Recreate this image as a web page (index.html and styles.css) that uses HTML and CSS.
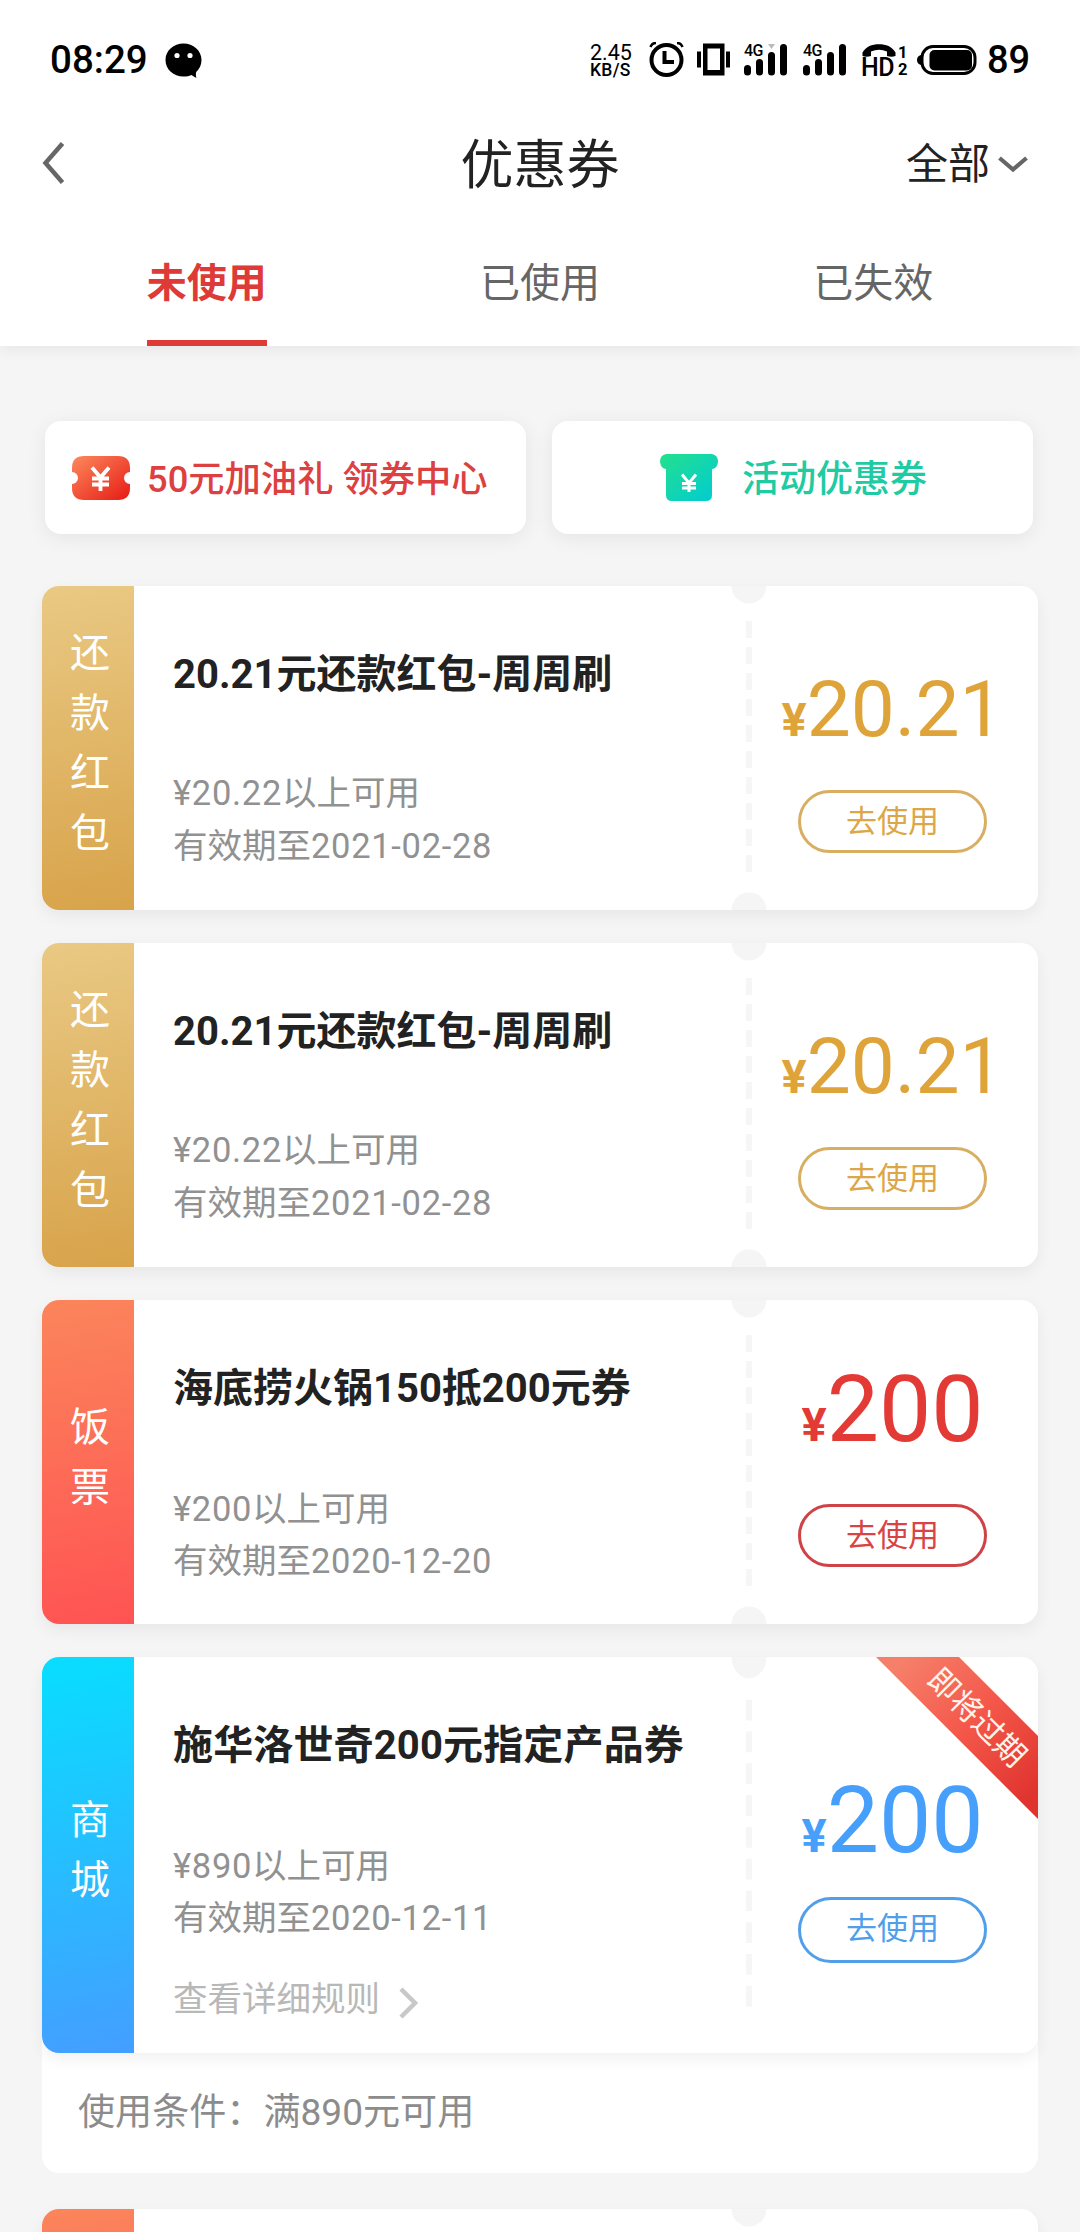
FILE: index.html
```html
<!DOCTYPE html>
<html lang="zh-CN">
<head>
<meta charset="utf-8">
<title>优惠券</title>
<link rel="stylesheet" href="styles.css">
</head>
<body>
<svg class="defs" width="0" height="0" aria-hidden="true">
  <defs>
    <symbol id="perforation" viewBox="0 0 36 324" preserveAspectRatio="none">
      <circle cx="18" cy="0" r="17.5" fill="#f5f5f5"/>
      <path d="M18 35V287" stroke="#f6f6f6" stroke-width="6" stroke-dasharray="17 9"/>
    </symbol>
    <symbol id="notch" viewBox="0 0 36 18"><circle cx="18" cy="18" r="17.5" fill="#f5f5f5"/></symbol>
    <symbol id="signal" viewBox="0 0 44 34">
      <path d="M3.500 26.500V30M15.500 20.500V30M27.500 13.500V30M39.500 5.500V30" stroke="#000" stroke-width="7" stroke-linecap="round"/>
    </symbol>
  </defs>
</svg>
<div class="screen">
  <header class="header">
    <div class="status">
      <span class="clock">08:29</span>
      <svg class="chat" viewBox="0 0 37 36"><path d="M18.5.5C8.700.5.5 7.500.5 17s8 16.500 18 16.500c3 0 5.500-.4 8-1.500 1.500 1 3 2.200 5 3-.8-1.800-.8-4-.3-6 3.300-3 5.300-7.200 5.300-12C36.500 7.500 28.300.5 18.500.5z"/><circle cx="12" cy="12.500" r="2.600" fill="#fff"/><circle cx="25" cy="12.500" r="2.600" fill="#fff"/></svg>
      <span class="spacer"></span>
      <div class="speed"><span>2.45</span><span class="unit">KB/S</span></div>
      <svg class="alarm" viewBox="0 0 35 35"><circle cx="17.500" cy="18" r="15" fill="none" stroke="#000" stroke-width="4"/><path d="M15.500 9V20H25" fill="none" stroke="#000" stroke-width="4"/><path d="M1.500 5Q3 1 7 1M33.500 5Q32 1 28 1" fill="none" stroke="#000" stroke-width="2.500"/></svg>
      <svg class="vibrate" viewBox="0 0 33 33"><path fill-rule="evenodd" d="M6 .5H27.500V32.500H6zM10.500 5.500V27H23V5.500z"/><path d="M0 8.500H4V24.500H0zM29 8.500H33V24.500H29z"/></svg>
      <div class="cell"><span class="net">4G</span><svg class="bars" viewBox="0 0 44 34"><use href="#signal"/><path d="M24 2H31L27.500 7z" fill="#bbb"/></svg></div>
      <div class="cell"><span class="net">4G</span><svg class="bars" viewBox="0 0 44 34"><use href="#signal"/></svg></div>
      <div class="volte">
        <svg class="handset" viewBox="0 0 34 13"><path d="M.5 12V8.500C4 2.500 10 .3 17 .3S30 2.500 33.500 8.500V12Q29.500 13.500 25 12V7.500Q17 4 9 7.500V12Q4.500 13.500.5 12z"/></svg>
        <span class="hd">HD</span><span class="sim"><span>1</span><span>2</span></span>
      </div>
      <svg class="battery" viewBox="0 0 60 30"><rect x="5" y="1.500" width="53" height="27" rx="11" fill="none" stroke="#000" stroke-width="3"/><rect x="12.500" y="5" width="42.500" height="20.500" rx="5"/><path d="M4 10Q0 11 0 15t4 5z"/></svg>
      <span class="level">89</span>
    </div>
    <div class="navbar">
      <svg class="back" viewBox="0 0 22 42"><path d="M20.500 1.500L3.500 21L20.500 40.500" fill="none" stroke="#666" stroke-width="4.500"/></svg>
      <h1 class="title">优惠券</h1>
      <div class="filter"><span>全部</span><svg class="down" viewBox="0 0 30 17"><path d="M1.500 2L15 13.500L28.500 2" fill="none" stroke="#666" stroke-width="4.200"/></svg></div>
    </div>
    <nav class="tabs">
      <div class="tab active"><span>未使用</span></div>
      <div class="tab"><span>已使用</span></div>
      <div class="tab"><span>已失效</span></div>
    </nav>
  </header>

  <main class="content">
    <div class="promos">
      <div class="promo red">
        <svg class="ticket" viewBox="0 0 58 44"><defs><linearGradient id="tr" x1="0" y1="0" x2="1" y2="1"><stop offset="0" stop-color="#fc8a5d"/><stop offset="1" stop-color="#e71a14"/></linearGradient></defs><path fill="url(#tr)" d="M12 0H46Q58 0 58 12V16A6 6 0 0 0 58 28V32Q58 44 46 44H12Q0 44 0 32V28A6 6 0 0 0 0 16V12Q0 0 12 0z"/><path d="M20 11.500L28.500 21.500L37 11.500M28.500 21V35M20 22.500H37M20 28.500H37" fill="none" stroke="#fff" stroke-width="3.800"/></svg>
        <span>50元加油礼 领券中心</span>
      </div>
      <div class="promo green">
        <svg class="voucher" viewBox="0 0 58 47"><defs><linearGradient id="tg" x1="0" y1="0" x2="1" y2="1"><stop offset="0" stop-color="#24e08c"/><stop offset="1" stop-color="#00cbd4"/></linearGradient></defs><path fill="url(#tg)" d="M6 0H52Q58 1 58 8Q57 15 52 15V41Q52 47 46 47H12Q6 47 6 41V15Q1 15 0 8Q0 1 6 0z"/><path d="M22 20.500L29 29L36 20.500M29 29V38M22 29.500H36M22 34H36" fill="none" stroke="#fff" stroke-width="3"/></svg>
        <span>活动优惠券</span>
      </div>
    </div>

    <div class="list">
      <section class="coupon gold">
        <div class="kind"><span>还</span><span>款</span><span>红</span><span>包</span></div>
        <div class="info">
          <h2 class="name">20.21元还款红包-周周刷</h2>
          <p class="limit"><span class="num">¥20.22</span>以上可用</p>
          <p class="expiry">有效期至<span class="num">2021-02-28</span></p>
        </div>
        <svg class="perf"><use href="#perforation"/></svg><svg class="notch"><use href="#notch"/></svg>
        <div class="value"><div class="amount"><b>¥</b>20.21</div><div class="use">去使用</div></div>
      </section>

      <section class="coupon gold">
        <div class="kind"><span>还</span><span>款</span><span>红</span><span>包</span></div>
        <div class="info">
          <h2 class="name">20.21元还款红包-周周刷</h2>
          <p class="limit"><span class="num">¥20.22</span>以上可用</p>
          <p class="expiry">有效期至<span class="num">2021-02-28</span></p>
        </div>
        <svg class="perf"><use href="#perforation"/></svg><svg class="notch"><use href="#notch"/></svg>
        <div class="value"><div class="amount"><b>¥</b>20.21</div><div class="use">去使用</div></div>
      </section>

      <section class="coupon meal">
        <div class="kind"><span>饭</span><span>票</span></div>
        <div class="info">
          <h2 class="name">海底捞火锅150抵200元券</h2>
          <p class="limit"><span class="num">¥200</span>以上可用</p>
          <p class="expiry">有效期至<span class="num">2020-12-20</span></p>
        </div>
        <svg class="perf"><use href="#perforation"/></svg><svg class="notch"><use href="#notch"/></svg>
        <div class="value"><div class="amount"><b>¥</b>200</div><div class="use">去使用</div></div>
      </section>

      <div class="expanded">
        <section class="coupon mall">
          <div class="kind"><span>商</span><span>城</span></div>
          <div class="info">
            <h2 class="name">施华洛世奇200元指定产品券</h2>
            <p class="limit"><span class="num">¥890</span>以上可用</p>
            <p class="expiry">有效期至<span class="num">2020-12-11</span></p>
            <p class="rules"><span>查看详细规则</span><svg class="more" viewBox="0 0 19 32"><path d="M2 2L16 16L2 30" fill="none" stroke="#c8c8c8" stroke-width="4.500"/></svg></p>
          </div>
          <svg class="perf"><use href="#perforation"/></svg>
          <div class="value"><div class="amount"><b>¥</b>200</div><div class="use">去使用</div></div>
          <div class="corner"><span>即将过期</span></div>
        </section>
        <p class="terms">使用条件：满890元可用</p>
      </div>

      <section class="coupon meal">
        <div class="kind"></div>
        <div class="info"></div>
        <svg class="perf"><use href="#perforation"/></svg>
      </section>
    </div>
  </main>
</div>
</body>
</html>
```
FILE: styles.css
```css
* { box-sizing: border-box; margin: 0; padding: 0; }
body { background: #f5f5f5; color: #222; font-family: Roboto, "Noto Sans CJK SC", sans-serif; }
svg { display: block; flex: none; }
.defs { position: absolute; }
.screen { width: 1080px; height: 2232px; overflow: hidden; background: #f5f5f5; }

.header { height: 346px; background: #fff; box-shadow: 0 4px 14px rgba(0, 0, 0, .06); }
.status { display: flex; align-items: flex-start; height: 116px; padding: 42px 0 0 50px; color: #000; font-weight: 500; }
.clock, .level { font-size: 38.5px; line-height: 36px; white-space: nowrap; }
.clock { width: 115px; }
.chat { width: 37px; height: 36px; margin-top: 1px; }
.spacer { flex: 1; }
.speed { display: flex; flex-direction: column; width: 42px; margin-right: 17px; font-size: 21.5px; line-height: 21px; font-weight: 400; }
.unit { font-size: 17.5px; line-height: 15px; font-weight: 500; letter-spacing: .3px; }
.alarm { width: 35px; height: 35px; margin-right: 13px; }
.vibrate { width: 33px; height: 33px; margin: 1px 14px 0 0; }
.cell { position: relative; width: 44px; margin-right: 15px; }
.bars { width: 44px; height: 34px; }
.net { position: absolute; left: 0; top: 0; font-size: 16px; line-height: 17px; letter-spacing: -.5px; }
.volte { position: relative; width: 46px; height: 36px; margin-right: 9px; display: flex; align-items: flex-end; }
.handset { position: absolute; left: 0; top: 2px; width: 34px; height: 13px; }
.hd { width: 36px; font-size: 25px; line-height: 21px; letter-spacing: -.5px; font-weight: 500; margin-left: -1px; }
.sim { display: flex; flex-direction: column; font-size: 16.5px; line-height: 17px; font-weight: 700; margin-left: 1px; }
.battery { width: 60px; height: 30px; margin: 3px 10px 0 0; }
.level { width: 93px; font-size: 38px; }

.navbar { display: grid; grid-template-columns: 1fr auto 1fr; align-items: center; height: 94px; padding: 0 52px 0 42px; }
.back { width: 22px; height: 42px; }
.title { font-size: 53px; font-weight: 400; line-height: 60px; margin: 5px 0 0 10px; }
.filter { display: flex; justify-content: flex-end; align-items: center; gap: 8px; font-size: 42px; line-height: 60px; padding-top: 3px; }
.down { width: 30px; height: 17px; }
.tabs { display: flex; height: 136px; padding: 0 40px; }
.tab { flex: 1; display: flex; justify-content: center; color: #666; font-size: 40px; line-height: 148px; }
.tab.active { color: #dd3a38; font-weight: 700; }
.tab.active span { border-bottom: 6px solid #dd3a38; height: 136px; }

.content { padding: 75px 42px 0; }
.promos { display: grid; grid-template-columns: repeat(2, minmax(0, 1fr)); gap: 26px; padding: 0 5px 0 3px; }
.promo { display: flex; align-items: center; height: 113px; border-radius: 16px; background: #fff; box-shadow: 0 4px 20px rgba(0, 0, 0, .07); font-size: 37px; font-weight: 500; line-height: 50px; white-space: nowrap; }
.promo span { padding-top: 5px; }
.promo.red { color: #dd4040; padding-left: 27px; gap: 17px; font-size: 36.3px; }
.promo.green { color: #1fcba2; padding-left: 108px; gap: 24px; }
.ticket { width: 58px; height: 44px; }
.voucher { width: 58px; height: 47px; }

.list { display: flex; flex-direction: column; gap: 33px; padding-top: 52px; }
.coupon { position: relative; display: flex; height: 324px; border-radius: 17px; background: #fff; box-shadow: 0 6px 16px rgba(0, 0, 0, .06); }
.kind { width: 92px; flex: none; border-radius: 17px 0 0 17px; display: flex; flex-direction: column; align-items: center; justify-content: center; padding: 0 0 9px 4px; color: #fff; font-size: 40px; line-height: 60px; }
.gold .kind { background: linear-gradient(170deg, #e9c984, #d8a34a); }
.meal .kind { background: linear-gradient(170deg, #fb855b, #ff5353); }
.mall .kind { background: linear-gradient(170deg, #08deff, #449eff); }
.info { flex: 1; padding: 59px 0 0 39px; white-space: nowrap; color: #919191; font-size: 34.5px; line-height: 52px; }
.num { letter-spacing: .7px; }
.name { height: 60px; margin-bottom: 64px; font-size: 40px; line-height: 60px; font-weight: 700; color: #222; }
.gold .name { margin-bottom: 62px; }
.gold .info { line-height: 53px; }
.mall .name { letter-spacing: .15px; }
.rules { display: flex; align-items: center; gap: 19px; padding-top: 29px; color: #b8b8b8; }
.more { width: 19px; height: 32px; margin-top: 8px; }
.perf { position: absolute; left: 689px; top: 0; width: 36px; height: 100%; }
.notch { position: absolute; left: 689px; bottom: 0; width: 36px; height: 18px; }
.value { width: 291px; flex: none; display: flex; flex-direction: column; align-items: center; padding-top: 78px; }
.amount { height: 126px; font-size: 78.4px; line-height: 91px; white-space: nowrap; }
.amount b { font-size: 47px; font-weight: 700; }
.gold .amount { color: #dfa439; }
.meal .value { padding-top: 64px; }
.meal .amount, .mall .amount { font-size: 93px; height: 140px; }
.meal .amount { color: #e43a36; }
.mall .value { padding-top: 118px; }
.mall .amount { color: #469ffb; height: 122px; }
.use { width: 189px; height: 63px; border: 3px solid #d8ae62; border-radius: 32px; color: #dca748; font-size: 31px; line-height: 58px; text-align: center; }
.meal .use { border-color: #cf4346; color: #d84446; }
.mall .use { height: 66px; border-color: #519feb; color: #519feb; border-radius: 34px; }
.mall.coupon { height: 396px; }
.corner { position: absolute; right: 0; top: 0; width: 162px; height: 162px; background: linear-gradient(135deg, #f67f69 10%, #f4574a 50%, #e0352f 90%); clip-path: polygon(0 0, 83px 0, 100% 79px, 100% 100%); border-radius: 0 17px 0 0; }
.corner span { position: absolute; left: 19px; top: 40px; width: 163px; line-height: 42px; text-align: center; color: #fff3ea; font-size: 31px; transform: rotate(45deg); white-space: nowrap; }
.expanded { background: #fff; border-radius: 17px; height: 516px; margin-bottom: 3px; }
.terms { padding-left: 36px; font-size: 37.1px; line-height: 60px; margin-top: 30px; color: #8c8c8c; }
```
